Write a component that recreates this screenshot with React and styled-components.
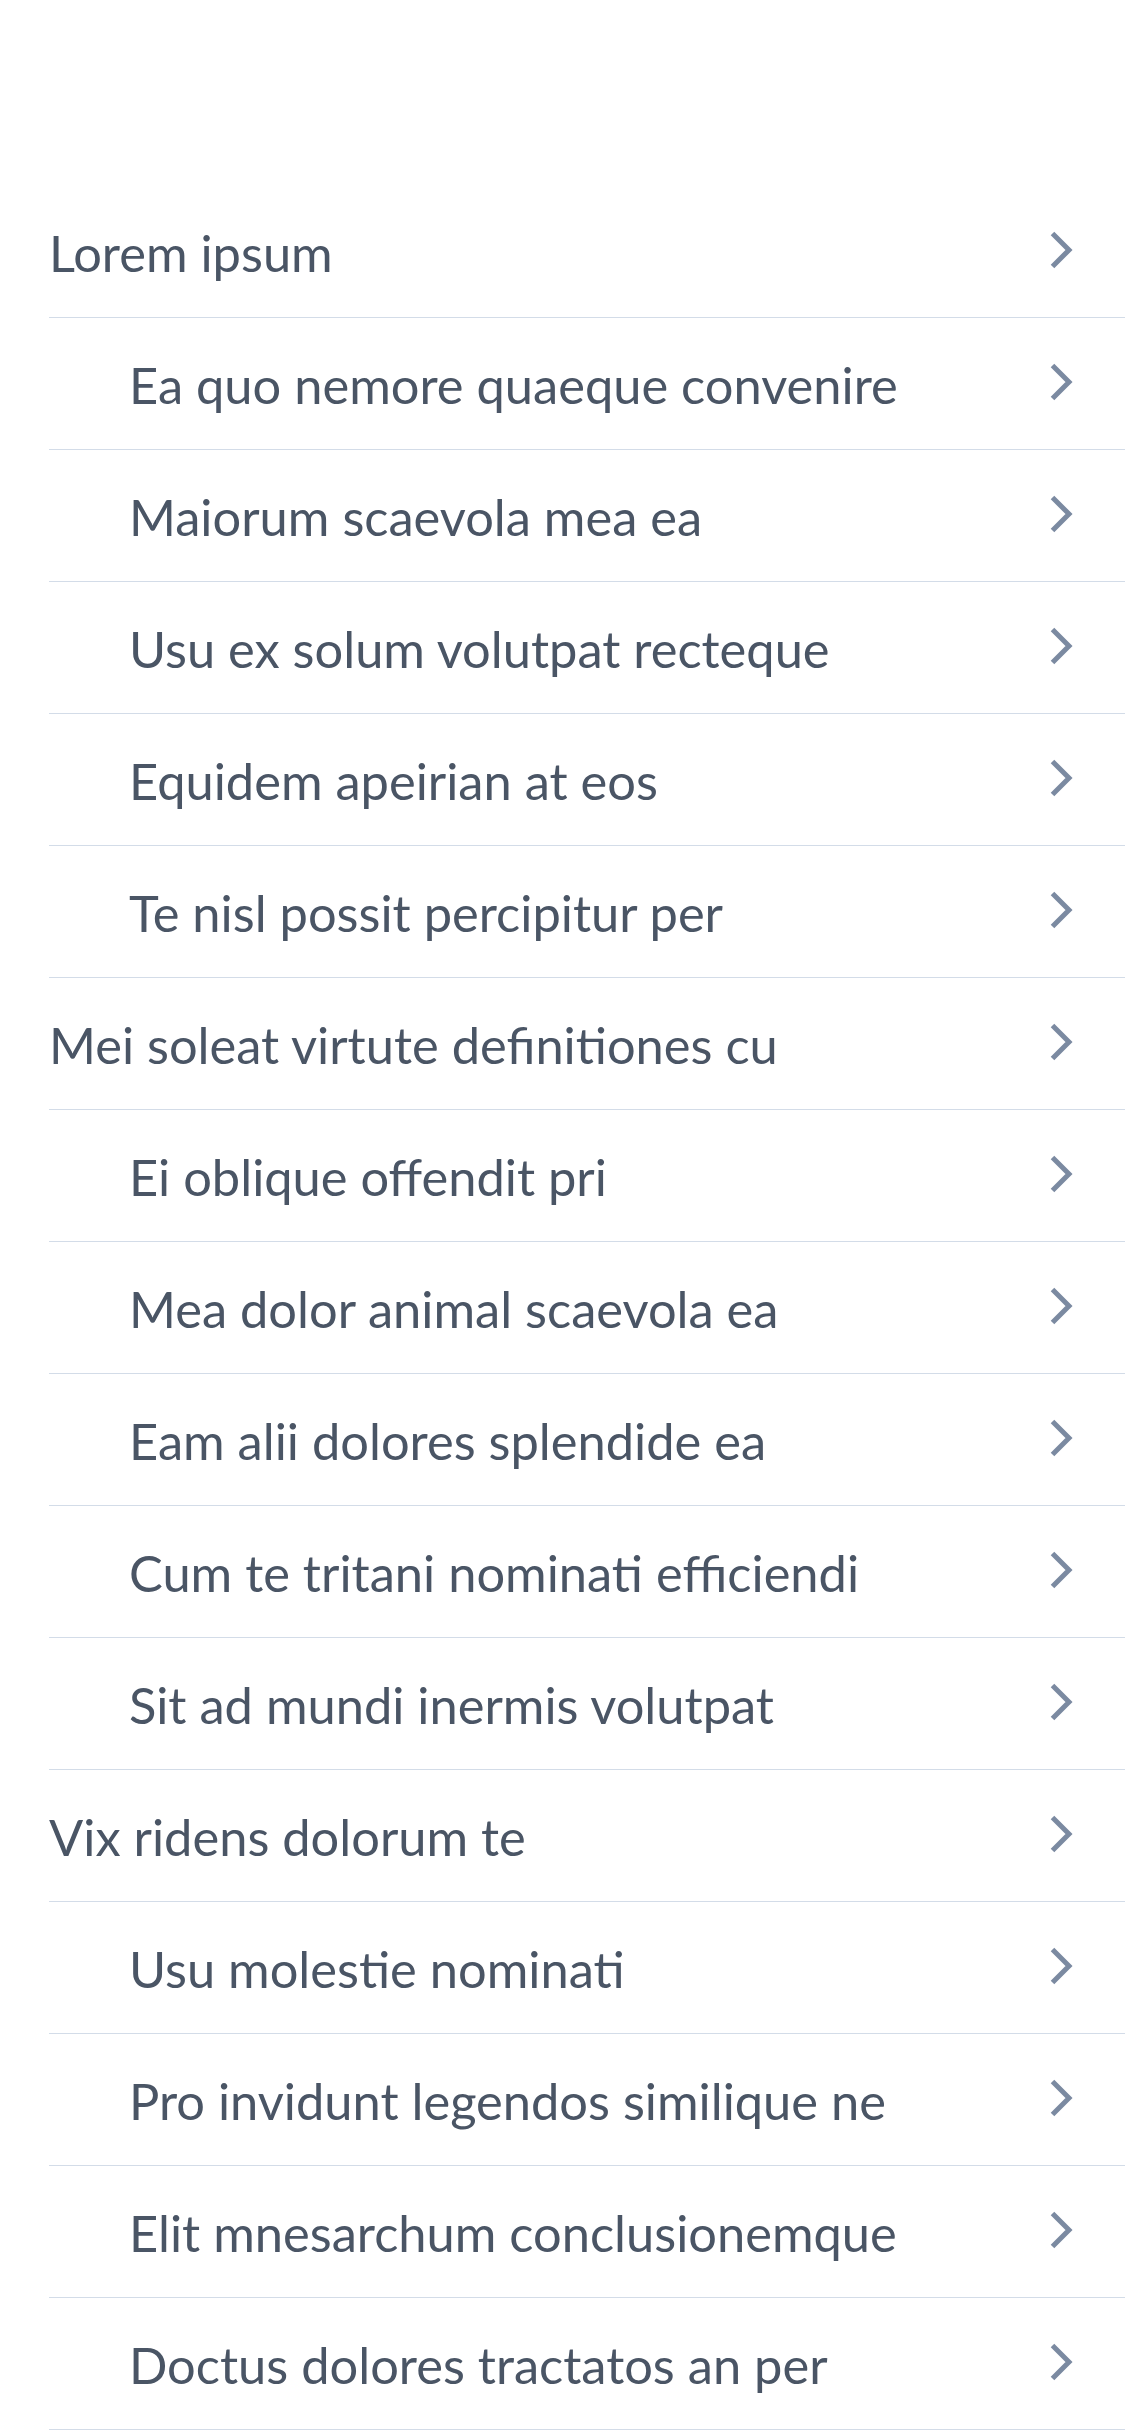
import React from 'react';
import styled, { createGlobalStyle } from 'styled-components';

const GlobalStyle = createGlobalStyle`
  body {
    margin: 0;
    background: #ffffff;
    font-family: Lato, "Open Sans", sans-serif;
  }
`;

const Page = styled.div`
  padding-top: 186px;
  padding-left: 49px;
`;

const List = styled.ul`
  list-style: none;
  margin: 0;
  padding: 0;
`;

const Row = styled.li`
  display: flex;
  align-items: center;
  justify-content: space-between;
  box-sizing: content-box;
  height: 130px;
  padding: 1px 52px 0 ${(p) => (p.$nested ? '80px' : '0')};
  border-bottom: 1px solid #d3dce8;
`;

const Label = styled.span`
  font-size: 50.6px;
  color: #4a5565;
  white-space: nowrap;
`;

const Chevron = styled.svg`
  flex: none;
  width: 24px;
  height: 40px;
  margin-top: -4px;
`;

const items = [
  { label: 'Lorem ipsum' },
  { label: 'Ea quo nemore quaeque convenire', nested: true },
  { label: 'Maiorum scaevola mea ea', nested: true },
  { label: 'Usu ex solum volutpat recteque', nested: true },
  { label: 'Equidem apeirian at eos', nested: true },
  { label: 'Te nisl possit percipitur per', nested: true },
  { label: 'Mei soleat virtute definitiones cu' },
  { label: 'Ei oblique offendit pri', nested: true },
  { label: 'Mea dolor animal scaevola ea', nested: true },
  { label: 'Eam alii dolores splendide ea', nested: true },
  { label: 'Cum te tritani nominati efficiendi', nested: true },
  { label: 'Sit ad mundi inermis volutpat', nested: true },
  { label: 'Vix ridens dolorum te' },
  { label: 'Usu molestie nominati', nested: true },
  { label: 'Pro invidunt legendos similique ne', nested: true },
  { label: 'Elit mnesarchum conclusionemque', nested: true },
  { label: 'Doctus dolores tractatos an per', nested: true },
];

function ChevronIcon() {
  return (
    <Chevron viewBox="0 0 24 40" aria-hidden="true">
      <polyline
        points="3.5,3.5 20,20 3.5,36.5"
        fill="none"
        stroke="#7b8aa1"
        strokeWidth="5"
        strokeLinejoin="miter"
      />
    </Chevron>
  );
}

export default function App() {
  return (
    <Page>
      <GlobalStyle />
      <List>
        {items.map((item) => (
          <Row key={item.label} $nested={item.nested}>
            <Label>{item.label}</Label>
            <ChevronIcon />
          </Row>
        ))}
      </List>
    </Page>
  );
}
